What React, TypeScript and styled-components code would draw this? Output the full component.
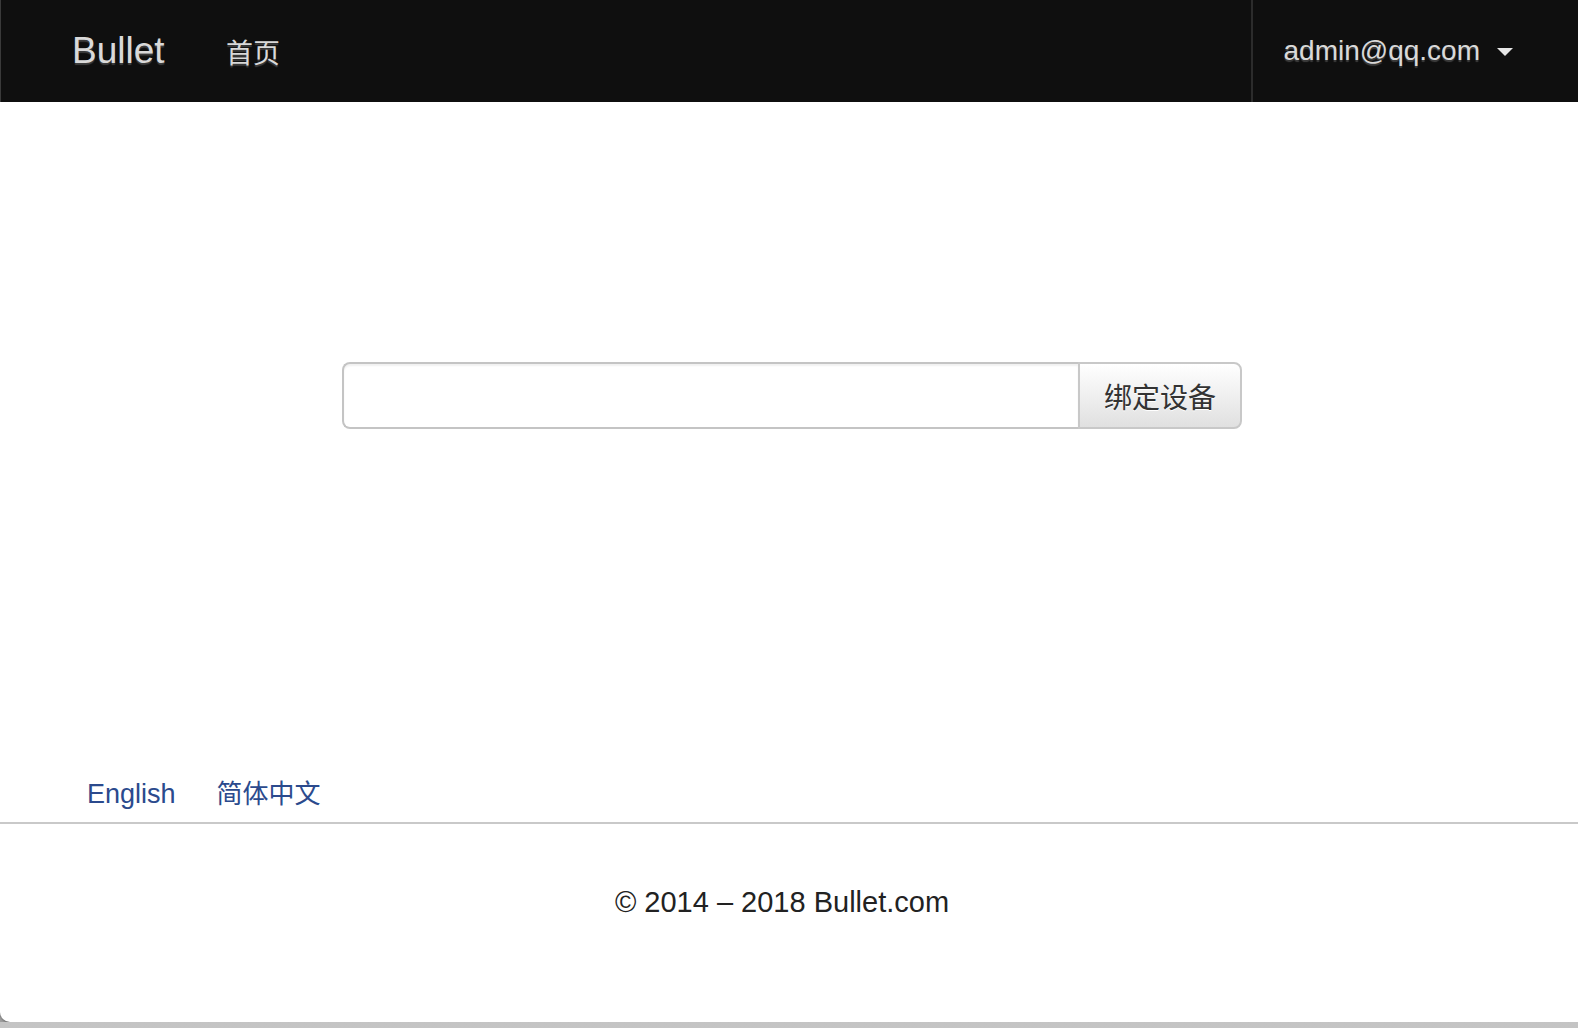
import React from 'react'
import styled, { createGlobalStyle } from 'styled-components'

const GlobalStyle = createGlobalStyle`
	html, body {
		margin: 0;
		padding: 0;
	}
	body {
		background: linear-gradient(#c4c4c4, #9e9e9e);
		font-family: "Liberation Sans", "Noto Sans CJK SC", sans-serif;
		color: #333;
	}
`

const Window = styled.div`
	height: 1022px;
	background: #fff;
	border-bottom-left-radius: 10px;
	box-shadow: 0 1px 2px rgba(0, 0, 0, 0.35);
	display: flex;
	flex-direction: column;
	overflow: hidden;
`

const Navbar = styled.nav`
	height: 102px;
	background: #0f0f0f;
	border-left: 1px solid #3a3a3a;
	display: flex;
	align-items: stretch;
	flex-shrink: 0;
`

const Brand = styled.a`
	display: flex;
	align-items: center;
	padding: 0 0 0 71px;
	width: 154px;
	font-size: 37px;
	color: #d9d9d9;
	text-shadow: 0 2px 1px rgba(120, 120, 120, 0.45);
	text-decoration: none;
`

const NavLink = styled.a`
	display: flex;
	align-items: center;
	font-size: 27px;
	color: #d9d9d9;
	text-shadow: 0 2px 1px rgba(120, 120, 120, 0.45);
	text-decoration: none;
`

const NavRight = styled.div`
	margin-left: auto;
	display: flex;
	align-items: center;
	gap: 17px;
	padding: 0 65px 0 30px;
	border-left: 2px solid #2c2c2c;
	font-size: 28px;
	color: #d9d9d9;
	text-shadow: 0 2px 1px rgba(120, 120, 120, 0.45);
`

const Caret = styled.span`
	width: 0;
	height: 0;
	border-left: 8px solid transparent;
	border-right: 8px solid transparent;
	border-top: 8px solid #e6e6e6;
	margin-top: 2px;
`

const Main = styled.main`
	flex: 1;
	display: flex;
	flex-direction: column;
	padding-top: 260px;
`

const BindRow = styled.div`
	display: flex;
	justify-content: center;
	padding-left: 6px;
`

const InputGroup = styled.form`
	display: flex;
	width: 900px;
	height: 67px;
`

const TextInput = styled.input`
	flex: 1;
	border: 2px solid #c4c4c4;
	border-right: none;
	border-radius: 8px 0 0 8px;
	box-shadow: inset 0 2px 2px rgba(0, 0, 0, 0.06);
	font-size: 28px;
	padding: 0 20px;
	outline: none;
`

const BindButton = styled.button`
	width: 164px;
	border: 2px solid #c8c8c8;
	border-radius: 0 8px 8px 0;
	background: linear-gradient(#ffffff, #e0e0e0);
	font-family: "Liberation Sans", "Noto Sans CJK SC", sans-serif;
	font-size: 28px;
	color: #333;
	text-shadow: 0 1px 0 #fff;
	padding: 0;
`

const LangBar = styled.div`
	margin-top: auto;
	display: flex;
	align-items: center;
	gap: 41px;
	padding: 0 0 8px 87px;
	line-height: 40px;
`

const LangLink = styled.a<{ $size: number }>`
	font-size: ${p => p.$size}px;
	color: #2b4a8d;
	text-decoration: none;
`

const Footer = styled.footer`
	height: 200px;
	border-top: 2px solid #c9c9c9;
	flex-shrink: 0;
	text-align: center;
	padding: 62px 14px 0 0;
	box-sizing: border-box;
	font-size: 29px;
	line-height: 32px;
	color: #222;
`

const App: React.FC = () => {
	return (
		<>
			<GlobalStyle />
			<Window>
				<Navbar>
					<Brand href="#">Bullet</Brand>
					<NavLink href="#">首页</NavLink>
					<NavRight>
						<span>admin@qq.com</span>
						<Caret />
					</NavRight>
				</Navbar>
				<Main>
					<BindRow>
						<InputGroup onSubmit={e => e.preventDefault()}>
							<TextInput type="text" />
							<BindButton type="submit">绑定设备</BindButton>
						</InputGroup>
					</BindRow>
					<LangBar>
						<LangLink $size={27} href="#">English</LangLink>
						<LangLink $size={26} href="#">简体中文</LangLink>
					</LangBar>
				</Main>
				<Footer>© 2014 – 2018 Bullet.com</Footer>
			</Window>
		</>
	)
}

export default App
